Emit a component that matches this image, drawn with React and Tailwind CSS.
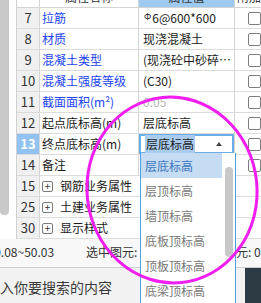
import React from "react";

const rows = [
  { n: 7, name: "拉筋", value: "rebar", blue: true, check: true },
  { n: 8, name: "材质", value: "现浇混凝土", blue: true, check: true },
  { n: 9, name: "混凝土类型", value: "(现浇砼中砂碎石GD40 32.5)", blue: true, check: true },
  { n: 10, name: "混凝土强度等级", value: "(C30)", blue: true, check: true },
  { n: 11, name: "截面面积(m²)", value: "0.05", blue: true, muted: true, check: true },
  { n: 12, name: "起点底标高(m)", value: "层底标高", check: true },
  { n: 13, name: "终点底标高(m)", edit: true, check: true },
  { n: 14, name: "备注", value: "", check: true },
  { n: 15, group: "钢筋业务属性" },
  { n: 25, group: "土建业务属性" },
  { n: 30, group: "显示样式" },
];

const options = ["层底标高", "层顶标高", "墙顶标高", "底板顶标高", "顶板顶标高", "底梁顶标高", "顶梁顶标高"];

function Checkbox() {
  return <div className="ml-[13px] w-[13px] h-[13px] border border-[#7d7d7d] rounded-[2px] bg-white shrink-0" />;
}

function PropRow({ row }) {
  const selected = row.edit;
  return (
    <div className="flex h-[21px] border-b border-[#dcdcdc] shrink-0">
      <div
        className={`w-[23px] border-r border-[#d4d4d4] flex items-center justify-center text-[13px] ${
          selected ? "bg-[#91c2f2] text-white font-bold" : "bg-[#f0f0f0] text-[#333]"
        }`}
      >
        {row.n}
      </div>

      {row.group ? (
        <div className="flex-1 flex items-center pl-[2px] text-[12px] text-[#1a1a1a]">
          <div className="w-[11px] h-[11px] border border-[#7a7a7a] rounded-[2px] flex items-center justify-center text-[10px] leading-none text-[#333]">
            +
          </div>
          <span className="ml-[7px]">{row.group}</span>
        </div>
      ) : (
        <>
          <div
            className={`w-[99px] border-r border-[#d4d4d4] flex items-center pl-[2px] text-[12px] whitespace-nowrap overflow-hidden ${
              row.blue ? "text-[#2143f2]" : "text-[#1a1a1a]"
            }`}
          >
            {row.name}
          </div>
          <div className="w-[96px] border-r border-[#d4d4d4] flex items-center text-[12px] overflow-hidden">
            {row.edit ? (
              <div className="w-full h-full border-2 border-[#69ade8] flex items-center pl-[4px] pr-[10px]">
                <span className="bg-[#a9cbed] text-[#222] px-[1px]">层底标高</span>
                <svg className="ml-auto" width="6" height="4" viewBox="0 0 6 4">
                  <path d="M0 4 L3 0 L6 4 Z" fill="#444" />
                </svg>
              </div>
            ) : row.value === "rebar" ? (
              <span className="pl-[5px] text-[#1a1a1a] whitespace-nowrap">
                <span className="text-[9px] align-[3px] mr-[1px]">Φ</span>6@600*600
              </span>
            ) : (
              <span
                className={`pl-[4px] truncate ${row.muted ? "text-[#b4b4b4]" : "text-[#1a1a1a]"}`}
              >
                {row.value}
              </span>
            )}
          </div>
          <div className="flex-1 flex items-center">{row.check && <Checkbox />}</div>
        </>
      )}
    </div>
  );
}

export default function App() {
  return (
    <div className="relative w-[261px] h-[303px] overflow-hidden bg-white font-['Noto_Sans_CJK_SC',sans-serif]">
      {/* property grid */}
      <div className="flex h-[239px] overflow-hidden">
        <div className="w-[16px] shrink-0 bg-white">
          <div className="w-[9px] h-[215px] bg-[#c9c9c9] rounded-b-[4px]" />
        </div>
        <div className="flex-1 flex flex-col border-l border-[#d0d0d0]">
          <div className="flex h-[22px] -mt-[14px] border-b border-[#d4d4d4] shrink-0 text-[12px] text-[#333]">
            <div className="w-[23px] border-r border-[#d4d4d4] bg-white" />
            <div className="w-[99px] border-r border-[#d4d4d4] flex items-center justify-center">属性名称</div>
            <div className="w-[96px] border-r border-[#d4d4d4] bg-[#9fcaf0] flex items-center justify-center">属性值</div>
            <div className="flex-1 flex items-center pl-[2px] whitespace-nowrap">附加</div>
          </div>
          {rows.map(r => (
            <PropRow key={r.n} row={r} />
          ))}
        </div>
      </div>

      {/* status bar */}
      <div className="flex items-center h-[29px] pb-[3px] border-b border-[#cfcfcf] bg-[#f8f8f8] text-[12px] text-[#333] whitespace-nowrap">
        <div className="w-[86px] overflow-hidden shrink-0">
          <span className="-ml-[10px] inline-block">-0.08~50.03</span>
        </div>
        <span className="w-[126px] shrink-0">选中图元: 0</span>
        <span>总图元: 0</span>
      </div>

      {/* search */}
      <div className="flex h-[35px] bg-[#f2f2f2]">
        <div className="flex-1 flex items-center pt-[4px] overflow-hidden whitespace-nowrap">
          <span className="-ml-[28px] text-[14px] text-[#3a3a3a]">请输入你要搜索的内容</span>
        </div>
        <div className="w-[16px] bg-[#2b3a43]" />
      </div>

      {/* dropdown list */}
      <div className="absolute left-[140px] top-[153px] w-[96px] h-[160px] flex bg-white border-x border-[#4ea3df]">
        <div className="flex-1 flex flex-col text-[12px] whitespace-nowrap overflow-hidden">
          {options.map((o, i) => (
            <div
              key={o}
              className={`h-[25px] shrink-0 flex items-center pl-[4px] ${
                i === 0 ? "bg-[#c6dcf2] text-[#3b75bf]" : "text-[#777]"
              }`}
            >
              {o}
            </div>
          ))}
        </div>
        <div className="w-[13px] shrink-0 flex justify-center">
          <div className="mt-[14px] w-[8px] h-[90px] rounded-full bg-[#c8c8c8]" />
        </div>
      </div>

      {/* annotation */}
      <svg className="absolute left-0 top-0 pointer-events-none" width="261" height="303" viewBox="0 0 261 303">
        <ellipse
          cx="172"
          cy="190"
          rx="85"
          ry="93"
          transform="rotate(-6 172 190)"
          fill="none"
          stroke="#f01ef0"
          strokeWidth="3"
        />
      </svg>
    </div>
  );
}
